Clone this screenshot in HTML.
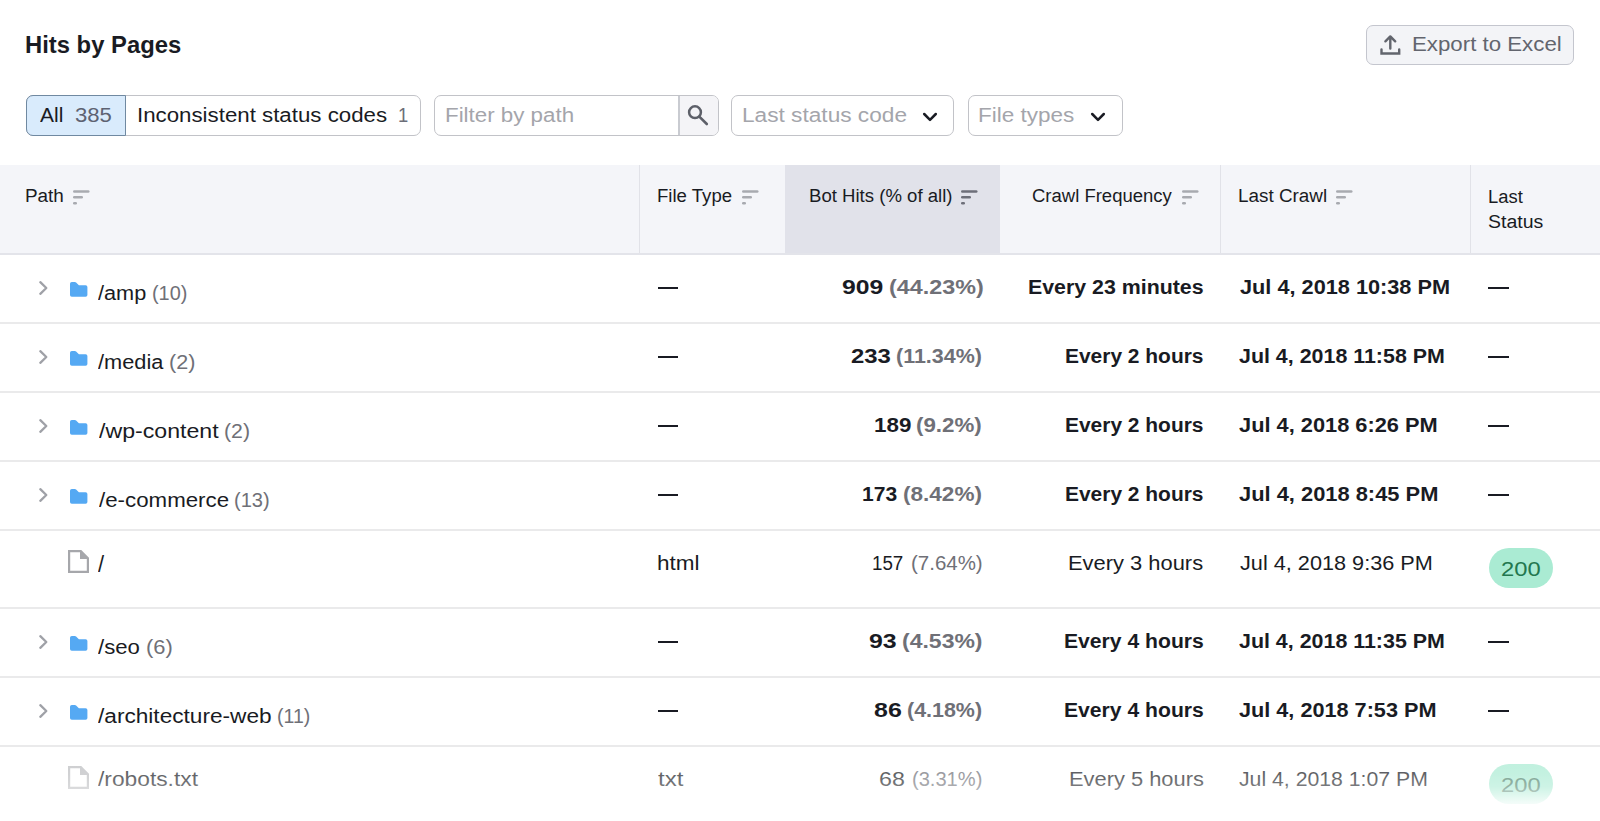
<!DOCTYPE html>
<html><head><meta charset="utf-8"><title>Hits by Pages</title><style>
*{box-sizing:border-box;margin:0;padding:0}
html,body{width:1600px;height:821px;overflow:hidden;background:#fff}
body{position:relative;font-family:"Liberation Sans", sans-serif;color:#191b23}
.ab{position:absolute;display:block}
.t{position:absolute;white-space:nowrap;line-height:1;transform-origin:0 0}
.box{position:absolute;border:1.6px solid #c2c3c8;border-radius:7px;background:#fff}
</style></head><body>

<div class="box" style="left:1366px;top:25px;width:208px;height:40px;background:#f3f4f7;border-color:#c4c6ce"></div>
<svg class="ab" style="left:1379px;top:34px" width="22" height="22" viewBox="0 0 22 22"><path d="M11.3 14.6 L11.3 2.6 M6.4 7.3 L11.3 2.4 L16.2 7.3" fill="none" stroke="#62656d" stroke-width="2.4" stroke-linecap="round" stroke-linejoin="round"/><path d="M2.5 15.4 L2.5 19.5 L20.2 19.5 L20.2 15.4" fill="none" stroke="#62656d" stroke-width="2.4" stroke-linecap="round" stroke-linejoin="miter"/></svg>
<div class="box" style="left:26px;top:95px;width:395px;height:40.8px;"></div>
<div class="ab" style="left:26px;top:95px;width:100px;height:40.8px;background:#d9ebfc;border:1.7px solid #7089a1;border-radius:7px 0 0 7px"></div>
<div class="box" style="left:433.5px;top:95px;width:285px;height:40.8px;overflow:hidden"><div class="ab" style="left:243px;top:0;width:41px;height:39px;background:#f4f4f7;border-left:2px solid #c9cbd1"></div></div>
<svg class="ab" style="left:686px;top:104px" width="24" height="23" viewBox="0 0 24 23"><circle cx="9" cy="8.2" r="5.9" fill="none" stroke="#5d6069" stroke-width="2.5"/><path d="M13.3 12.6 L20.8 20" stroke="#5d6069" stroke-width="2.6" stroke-linecap="round"/></svg>
<div class="box" style="left:731px;top:95px;width:223px;height:40.8px"></div>
<svg class="ab" style="left:920px;top:109px" width="20" height="16" viewBox="0 0 20 16"><path d="M4.2 5 L10 10.8 L15.8 5" fill="none" stroke="#191b23" stroke-width="2.5" stroke-linecap="round" stroke-linejoin="round"/></svg>
<div class="box" style="left:967.5px;top:95px;width:155px;height:40.8px"></div>
<svg class="ab" style="left:1088px;top:109px" width="20" height="16" viewBox="0 0 20 16"><path d="M4.2 5 L10 10.8 L15.8 5" fill="none" stroke="#191b23" stroke-width="2.5" stroke-linecap="round" stroke-linejoin="round"/></svg>
<div class="ab" style="left:0;top:165px;width:1600px;height:88px;background:#f4f5f9"></div>
<div class="ab" style="left:785px;top:165px;width:215px;height:88px;background:#e1e2ea"></div>
<div class="ab" style="left:0;top:253px;width:1600px;height:2px;background:#e3e4ea"></div>
<div class="ab" style="left:639px;top:165px;width:1px;height:88px;background:#e1e2e8"></div>
<div class="ab" style="left:1220px;top:165px;width:1px;height:88px;background:#e1e2e8"></div>
<div class="ab" style="left:1470px;top:165px;width:1px;height:88px;background:#e1e2e8"></div>
<svg class="ab" style="left:72px;top:189px" width="20" height="18" viewBox="0 0 20 18"><g stroke="#a8aab0" stroke-width="2.5" stroke-linecap="round"><line x1="2.25" y1="2.5" x2="16.25" y2="2.5"/><line x1="2.25" y1="8.3" x2="9.75" y2="8.3"/><line x1="2.25" y1="14.2" x2="3.75" y2="14.2"/></g></svg>
<svg class="ab" style="left:740.5px;top:189px" width="20" height="18" viewBox="0 0 20 18"><g stroke="#a8aab0" stroke-width="2.5" stroke-linecap="round"><line x1="2.25" y1="2.5" x2="16.25" y2="2.5"/><line x1="2.25" y1="8.3" x2="9.75" y2="8.3"/><line x1="2.25" y1="14.2" x2="3.75" y2="14.2"/></g></svg>
<svg class="ab" style="left:960px;top:189px" width="20" height="18" viewBox="0 0 20 18"><g stroke="#6d6f79" stroke-width="2.5" stroke-linecap="round"><line x1="2.25" y1="2.5" x2="16.25" y2="2.5"/><line x1="2.25" y1="8.3" x2="9.75" y2="8.3"/><line x1="2.25" y1="14.2" x2="3.75" y2="14.2"/></g></svg>
<svg class="ab" style="left:1181px;top:189px" width="20" height="18" viewBox="0 0 20 18"><g stroke="#a8aab0" stroke-width="2.5" stroke-linecap="round"><line x1="2.25" y1="2.5" x2="16.25" y2="2.5"/><line x1="2.25" y1="8.3" x2="9.75" y2="8.3"/><line x1="2.25" y1="14.2" x2="3.75" y2="14.2"/></g></svg>
<svg class="ab" style="left:1335px;top:189px" width="20" height="18" viewBox="0 0 20 18"><g stroke="#a8aab0" stroke-width="2.5" stroke-linecap="round"><line x1="2.25" y1="2.5" x2="16.25" y2="2.5"/><line x1="2.25" y1="8.3" x2="9.75" y2="8.3"/><line x1="2.25" y1="14.2" x2="3.75" y2="14.2"/></g></svg>
<svg class="ab" style="left:37px;top:278.8px" width="12" height="18" viewBox="0 0 12 18"><path d="M3.3 3.2 L9.3 9 L3.3 14.8" fill="none" stroke="#9fa1a7" stroke-width="2.3" stroke-linecap="round" stroke-linejoin="round"/></svg>
<svg class="ab" style="left:70px;top:281.9px" width="18" height="15" viewBox="0 0 18 15"><path d="M0 1.8 Q0 0 1.8 0 L4.8 0 Q5.6 0 6.1 0.5 L8.9 3.3 L15.6 3.3 Q17.4 3.3 17.4 5.1 L17.4 12.9 Q17.4 14.7 15.6 14.7 L1.8 14.7 Q0 14.7 0 12.9 Z" fill="#55a9f3"/></svg>
<div class="ab" style="left:1488.4px;top:286.9px;width:20.9px;height:2px;background:#191b23"></div>
<div class="ab" style="left:657.5px;top:286.9px;width:20.4px;height:2px;background:#191b23"></div>
<div class="ab" style="left:0;top:322px;width:1600px;height:2px;background:#eaeaeb"></div>
<svg class="ab" style="left:37px;top:347.8px" width="12" height="18" viewBox="0 0 12 18"><path d="M3.3 3.2 L9.3 9 L3.3 14.8" fill="none" stroke="#9fa1a7" stroke-width="2.3" stroke-linecap="round" stroke-linejoin="round"/></svg>
<svg class="ab" style="left:70px;top:350.9px" width="18" height="15" viewBox="0 0 18 15"><path d="M0 1.8 Q0 0 1.8 0 L4.8 0 Q5.6 0 6.1 0.5 L8.9 3.3 L15.6 3.3 Q17.4 3.3 17.4 5.1 L17.4 12.9 Q17.4 14.7 15.6 14.7 L1.8 14.7 Q0 14.7 0 12.9 Z" fill="#55a9f3"/></svg>
<div class="ab" style="left:1488.4px;top:355.9px;width:20.9px;height:2px;background:#191b23"></div>
<div class="ab" style="left:657.5px;top:355.9px;width:20.4px;height:2px;background:#191b23"></div>
<div class="ab" style="left:0;top:391px;width:1600px;height:2px;background:#eaeaeb"></div>
<svg class="ab" style="left:37px;top:416.8px" width="12" height="18" viewBox="0 0 12 18"><path d="M3.3 3.2 L9.3 9 L3.3 14.8" fill="none" stroke="#9fa1a7" stroke-width="2.3" stroke-linecap="round" stroke-linejoin="round"/></svg>
<svg class="ab" style="left:70px;top:419.9px" width="18" height="15" viewBox="0 0 18 15"><path d="M0 1.8 Q0 0 1.8 0 L4.8 0 Q5.6 0 6.1 0.5 L8.9 3.3 L15.6 3.3 Q17.4 3.3 17.4 5.1 L17.4 12.9 Q17.4 14.7 15.6 14.7 L1.8 14.7 Q0 14.7 0 12.9 Z" fill="#55a9f3"/></svg>
<div class="ab" style="left:1488.4px;top:424.9px;width:20.9px;height:2px;background:#191b23"></div>
<div class="ab" style="left:657.5px;top:424.9px;width:20.4px;height:2px;background:#191b23"></div>
<div class="ab" style="left:0;top:460px;width:1600px;height:2px;background:#eaeaeb"></div>
<svg class="ab" style="left:37px;top:485.8px" width="12" height="18" viewBox="0 0 12 18"><path d="M3.3 3.2 L9.3 9 L3.3 14.8" fill="none" stroke="#9fa1a7" stroke-width="2.3" stroke-linecap="round" stroke-linejoin="round"/></svg>
<svg class="ab" style="left:70px;top:488.9px" width="18" height="15" viewBox="0 0 18 15"><path d="M0 1.8 Q0 0 1.8 0 L4.8 0 Q5.6 0 6.1 0.5 L8.9 3.3 L15.6 3.3 Q17.4 3.3 17.4 5.1 L17.4 12.9 Q17.4 14.7 15.6 14.7 L1.8 14.7 Q0 14.7 0 12.9 Z" fill="#55a9f3"/></svg>
<div class="ab" style="left:1488.4px;top:493.9px;width:20.9px;height:2px;background:#191b23"></div>
<div class="ab" style="left:657.5px;top:493.9px;width:20.4px;height:2px;background:#191b23"></div>
<div class="ab" style="left:0;top:529px;width:1600px;height:2px;background:#eaeaeb"></div>
<svg class="ab" style="left:68px;top:550px" width="21" height="23" viewBox="0 0 21 23"><path d="M1.1 1.1 L12.8 1.1 L19.9 8.2 L19.9 21.9 L1.1 21.9 Z" fill="none" stroke="#a6a7ab" stroke-width="2.2" stroke-linejoin="miter"/><path d="M12 1 L20 9 L12 9 Z" fill="#a6a7ab"/></svg>
<div class="ab" style="left:1489px;top:548.3px;width:63.7px;height:40.2px;border-radius:20px;background:#aaebd3"></div>
<div class="ab" style="left:0;top:607px;width:1600px;height:2px;background:#eaeaeb"></div>
<svg class="ab" style="left:37px;top:632.8px" width="12" height="18" viewBox="0 0 12 18"><path d="M3.3 3.2 L9.3 9 L3.3 14.8" fill="none" stroke="#9fa1a7" stroke-width="2.3" stroke-linecap="round" stroke-linejoin="round"/></svg>
<svg class="ab" style="left:70px;top:635.9px" width="18" height="15" viewBox="0 0 18 15"><path d="M0 1.8 Q0 0 1.8 0 L4.8 0 Q5.6 0 6.1 0.5 L8.9 3.3 L15.6 3.3 Q17.4 3.3 17.4 5.1 L17.4 12.9 Q17.4 14.7 15.6 14.7 L1.8 14.7 Q0 14.7 0 12.9 Z" fill="#55a9f3"/></svg>
<div class="ab" style="left:1488.4px;top:640.9px;width:20.9px;height:2px;background:#191b23"></div>
<div class="ab" style="left:657.5px;top:640.9px;width:20.4px;height:2px;background:#191b23"></div>
<div class="ab" style="left:0;top:676px;width:1600px;height:2px;background:#eaeaeb"></div>
<svg class="ab" style="left:37px;top:701.8px" width="12" height="18" viewBox="0 0 12 18"><path d="M3.3 3.2 L9.3 9 L3.3 14.8" fill="none" stroke="#9fa1a7" stroke-width="2.3" stroke-linecap="round" stroke-linejoin="round"/></svg>
<svg class="ab" style="left:70px;top:704.9px" width="18" height="15" viewBox="0 0 18 15"><path d="M0 1.8 Q0 0 1.8 0 L4.8 0 Q5.6 0 6.1 0.5 L8.9 3.3 L15.6 3.3 Q17.4 3.3 17.4 5.1 L17.4 12.9 Q17.4 14.7 15.6 14.7 L1.8 14.7 Q0 14.7 0 12.9 Z" fill="#55a9f3"/></svg>
<div class="ab" style="left:1488.4px;top:709.9px;width:20.9px;height:2px;background:#191b23"></div>
<div class="ab" style="left:657.5px;top:709.9px;width:20.4px;height:2px;background:#191b23"></div>
<div class="ab" style="left:0;top:745px;width:1600px;height:2px;background:#eaeaeb"></div>
<svg class="ab" style="left:68px;top:766px" width="21" height="23" viewBox="0 0 21 23"><path d="M1.1 1.1 L12.8 1.1 L19.9 8.2 L19.9 21.9 L1.1 21.9 Z" fill="none" stroke="#bcbdc0" stroke-width="2.2" stroke-linejoin="miter"/><path d="M12 1 L20 9 L12 9 Z" fill="#bcbdc0"/></svg>
<div class="ab" style="left:1489px;top:764.3px;width:63.7px;height:40.2px;border-radius:20px;background:#aaebd3"></div>
<div class="t" style="left:25.22px;top:32.98px;font-size:24px;font-weight:bold;transform:scaleX(0.9923);color:#191b23">Hits by Pages</div>
<div class="t" style="left:1412.47px;top:34.07px;font-size:20px;transform:scaleX(1.1130);color:#62656e">Export to Excel</div>
<div class="t" style="left:39.70px;top:104.57px;font-size:20px;transform:scaleX(1.0476);color:#191b23">All</div>
<div class="t" style="left:74.69px;top:104.57px;font-size:20px;transform:scaleX(1.1063);color:#5d6272">385</div>
<div class="t" style="left:136.57px;top:104.57px;font-size:20px;transform:scaleX(1.1135);color:#191b23">Inconsistent status codes</div>
<div class="t" style="left:397.78px;top:104.57px;font-size:20px;transform:scaleX(0.9222);color:#6c6e79">1</div>
<div class="t" style="left:445.02px;top:105.07px;font-size:20px;transform:scaleX(1.1164);color:#a4a5ab">Filter by path</div>
<div class="t" style="left:741.73px;top:104.67px;font-size:20px;transform:scaleX(1.1329);color:#a4a5ab">Last status code</div>
<div class="t" style="left:978.45px;top:104.67px;font-size:20px;transform:scaleX(1.1241);color:#a4a5ab">File types</div>
<div class="t" style="left:25.25px;top:186.76px;font-size:18px;transform:scaleX(1.0486);color:#191b23">Path</div>
<div class="t" style="left:657.27px;top:187.26px;font-size:18px;transform:scaleX(1.0324);color:#191b23">File Type</div>
<div class="t" style="left:808.57px;top:187.26px;font-size:18px;transform:scaleX(1.0321);color:#191b23">Bot Hits (% of all)</div>
<div class="t" style="left:1031.97px;top:187.26px;font-size:18px;transform:scaleX(1.0274);color:#191b23">Crawl Frequency</div>
<div class="t" style="left:1237.95px;top:187.26px;font-size:18px;transform:scaleX(1.0482);color:#191b23">Last Crawl</div>
<div class="t" style="left:1488.28px;top:187.76px;font-size:18px;transform:scaleX(1.0212);color:#191b23">Last</div>
<div class="t" style="left:1487.92px;top:213.36px;font-size:18px;transform:scaleX(1.0816);color:#191b23">Status</div>
<div class="t" style="left:98.20px;top:282.57px;font-size:20px;transform:scaleX(1.0864);color:#191b23">/amp</div>
<div class="t" style="left:151.71px;top:282.57px;font-size:20px;transform:scaleX(0.9941);color:#6f7077">(10)</div>
<div class="t" style="left:841.76px;top:277.07px;font-size:20px;font-weight:bold;transform:scaleX(1.2375);color:#191b23">909</div>
<div class="t" style="left:888.63px;top:277.07px;font-size:20px;font-weight:bold;transform:scaleX(1.1671);color:#6f7077">(44.23%)</div>
<div class="t" style="left:1028.33px;top:277.07px;font-size:20px;font-weight:bold;transform:scaleX(1.0669);color:#191b23">Every 23 minutes</div>
<div class="t" style="left:1239.50px;top:277.07px;font-size:20px;font-weight:bold;transform:scaleX(1.0859);color:#191b23">Jul 4, 2018 10:38 PM</div>
<div class="t" style="left:98.00px;top:351.57px;font-size:20px;transform:scaleX(1.0883);color:#191b23">/media</div>
<div class="t" style="left:168.92px;top:351.57px;font-size:20px;transform:scaleX(1.0773);color:#6f7077">(2)</div>
<div class="t" style="left:850.51px;top:346.07px;font-size:20px;font-weight:bold;transform:scaleX(1.1937);color:#191b23">233</div>
<div class="t" style="left:896.33px;top:346.07px;font-size:20px;font-weight:bold;transform:scaleX(1.0744);color:#6f7077">(11.34%)</div>
<div class="t" style="left:1065.15px;top:346.07px;font-size:20px;font-weight:bold;transform:scaleX(1.0466);color:#191b23">Every 2 hours</div>
<div class="t" style="left:1239.00px;top:346.07px;font-size:20px;font-weight:bold;transform:scaleX(1.0702);color:#191b23">Jul 4, 2018 11:58 PM</div>
<div class="t" style="left:98.70px;top:420.57px;font-size:20px;transform:scaleX(1.1573);color:#191b23">/wp-content</div>
<div class="t" style="left:223.54px;top:420.57px;font-size:20px;transform:scaleX(1.0636);color:#6f7077">(2)</div>
<div class="t" style="left:873.98px;top:415.07px;font-size:20px;font-weight:bold;transform:scaleX(1.1187);color:#191b23">189</div>
<div class="t" style="left:916.28px;top:415.07px;font-size:20px;font-weight:bold;transform:scaleX(1.1158);color:#6f7077">(9.2%)</div>
<div class="t" style="left:1065.15px;top:415.07px;font-size:20px;font-weight:bold;transform:scaleX(1.0466);color:#191b23">Every 2 hours</div>
<div class="t" style="left:1239.00px;top:415.07px;font-size:20px;font-weight:bold;transform:scaleX(1.0901);color:#191b23">Jul 4, 2018 6:26 PM</div>
<div class="t" style="left:98.70px;top:489.57px;font-size:20px;transform:scaleX(1.1147);color:#191b23">/e-commerce</div>
<div class="t" style="left:233.70px;top:489.57px;font-size:20px;transform:scaleX(1.0029);color:#6f7077">(13)</div>
<div class="t" style="left:861.55px;top:484.07px;font-size:20px;font-weight:bold;transform:scaleX(1.0531);color:#191b23">173</div>
<div class="t" style="left:903.17px;top:484.07px;font-size:20px;font-weight:bold;transform:scaleX(1.1279);color:#6f7077">(8.42%)</div>
<div class="t" style="left:1065.15px;top:484.07px;font-size:20px;font-weight:bold;transform:scaleX(1.0466);color:#191b23">Every 2 hours</div>
<div class="t" style="left:1239.00px;top:484.07px;font-size:20px;font-weight:bold;transform:scaleX(1.0934);color:#191b23">Jul 4, 2018 8:45 PM</div>
<div class="t" style="left:98.30px;top:551.88px;font-size:24px;transform:scaleX(0.9143);color:#191b23">/</div>
<div class="t" style="left:657.38px;top:553.07px;font-size:20px;transform:scaleX(1.1250);color:#191b23">html</div>
<div class="t" style="left:872.06px;top:553.07px;font-size:20px;transform:scaleX(0.9375);color:#191b23">157</div>
<div class="t" style="left:910.98px;top:553.07px;font-size:20px;transform:scaleX(1.0235);color:#6f7077">(7.64%)</div>
<div class="t" style="left:1068.01px;top:553.07px;font-size:20px;transform:scaleX(1.0950);color:#191b23">Every 3 hours</div>
<div class="t" style="left:1239.50px;top:553.07px;font-size:20px;transform:scaleX(1.0841);color:#191b23">Jul 4, 2018 9:36 PM</div>
<div class="t" style="left:1500.81px;top:559.07px;font-size:20px;transform:scaleX(1.1875);color:#23774f">200</div>
<div class="t" style="left:98.30px;top:636.57px;font-size:20px;transform:scaleX(1.1081);color:#191b23">/seo</div>
<div class="t" style="left:145.50px;top:636.57px;font-size:20px;transform:scaleX(1.0955);color:#6f7077">(6)</div>
<div class="t" style="left:869.36px;top:631.07px;font-size:20px;font-weight:bold;transform:scaleX(1.2429);color:#191b23">93</div>
<div class="t" style="left:901.85px;top:631.07px;font-size:20px;font-weight:bold;transform:scaleX(1.1500);color:#6f7077">(4.53%)</div>
<div class="t" style="left:1063.84px;top:631.07px;font-size:20px;font-weight:bold;transform:scaleX(1.0565);color:#191b23">Every 4 hours</div>
<div class="t" style="left:1239.00px;top:631.07px;font-size:20px;font-weight:bold;transform:scaleX(1.0702);color:#191b23">Jul 4, 2018 11:35 PM</div>
<div class="t" style="left:98.30px;top:705.57px;font-size:20px;transform:scaleX(1.1320);color:#191b23">/architecture-web</div>
<div class="t" style="left:277.12px;top:705.57px;font-size:20px;transform:scaleX(0.9750);color:#6f7077">(11)</div>
<div class="t" style="left:873.95px;top:700.07px;font-size:20px;font-weight:bold;transform:scaleX(1.2476);color:#191b23">86</div>
<div class="t" style="left:907.23px;top:700.07px;font-size:20px;font-weight:bold;transform:scaleX(1.0721);color:#6f7077">(4.18%)</div>
<div class="t" style="left:1063.84px;top:700.07px;font-size:20px;font-weight:bold;transform:scaleX(1.0565);color:#191b23">Every 4 hours</div>
<div class="t" style="left:1239.00px;top:700.07px;font-size:20px;font-weight:bold;transform:scaleX(1.0829);color:#191b23">Jul 4, 2018 7:53 PM</div>
<div class="t" style="left:98.30px;top:769.07px;font-size:20px;transform:scaleX(1.1386);color:#191b23">/robots.txt</div>
<div class="t" style="left:657.75px;top:769.07px;font-size:20px;transform:scaleX(1.2024);color:#191b23">txt</div>
<div class="t" style="left:879.34px;top:769.07px;font-size:20px;transform:scaleX(1.1600);color:#191b23">68</div>
<div class="t" style="left:911.90px;top:769.07px;font-size:20px;transform:scaleX(1.0044);color:#6f7077">(3.31%)</div>
<div class="t" style="left:1068.81px;top:769.07px;font-size:20px;transform:scaleX(1.0934);color:#191b23">Every 5 hours</div>
<div class="t" style="left:1239.00px;top:769.07px;font-size:20px;transform:scaleX(1.0614);color:#191b23">Jul 4, 2018 1:07 PM</div>
<div class="t" style="left:1500.81px;top:775.07px;font-size:20px;transform:scaleX(1.1875);color:#4a7f68">200</div>
<div class="ab" style="left:0;top:747px;width:1600px;height:74px;background:linear-gradient(to bottom, rgba(255,255,255,0.22) 0px, rgba(255,255,255,0.3) 26px, rgba(255,255,255,0.42) 40px, rgba(255,255,255,0.85) 56px, rgba(255,255,255,1) 74px)"></div>
</body></html>
